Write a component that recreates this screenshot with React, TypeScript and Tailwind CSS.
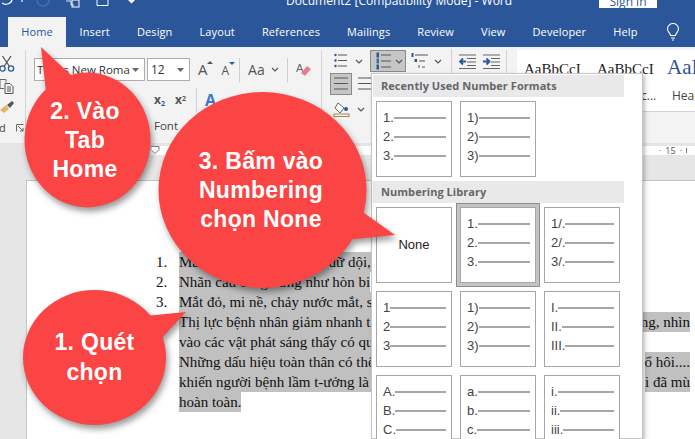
import React from "react";

const sans = "font-['Liberation_Sans',Arial,sans-serif]";
const ui = "font-['Open_Sans','Noto_Sans',sans-serif]";

function Chevron({ className = "" }: { className?: string }) {
  return (
    <svg width="8" height="5" viewBox="0 0 8 5" className={className}>
      <path d="M1 1l3 3 3-3" fill="none" stroke="#555" strokeWidth="1.2" />
    </svg>
  );
}

function Sep({ h = "h-[24px]" }: { h?: string }) {
  return <div className={`w-px bg-[#cfcfcf] ${h}`} />;
}

function Lines({ n = 3, w = 14, color = "#555", dots = false }: { n?: number; w?: number; color?: string; dots?: boolean }) {
  const ys = n === 3 ? [2, 7.5, 13] : [1.5, 5, 8.5, 12, 15];
  return (
    <svg width={w} height="16" viewBox={`0 0 ${w} 16`}>
      {ys.map((y) => (
        <line key={y} x1={dots ? 4 : 0} x2={w} y1={y} y2={y} stroke={color} strokeWidth="1" />
      ))}
      {dots &&
        ys.map((y) => <circle key={y} cx="1.5" cy={y} r="1.2" fill="#2b579a" />)}
    </svg>
  );
}

function NumIcon() {
  return (
    <svg width="15" height="18" viewBox="0 0 15 18">
      {[3, 9, 15].map((y, i) => (
        <g key={y}>
          <rect x="0.5" y={y - 2.5} width="2.5" height="5" fill="#2b579a" opacity={i === 1 ? 0.8 : 1} />
          <line x1="5" x2="15" y1={y} y2={y} stroke="#555" />
        </g>
      ))}
    </svg>
  );
}

function MultiIcon() {
  return (
    <svg width="18" height="18" viewBox="0 0 18 18">
      <rect x="0.5" y="1" width="2" height="4" fill="#2b579a" />
      <line x1="4" x2="17" y1="3" y2="3" stroke="#555" />
      <rect x="3.5" y="7" width="2.5" height="3" fill="#2b579a" />
      <line x1="8" x2="14" y1="9" y2="9" stroke="#555" />
      <line x1="8" x2="8" y1="13" y2="16" stroke="#555" />
      <line x1="11" x2="14" y1="15" y2="15" stroke="#555" />
    </svg>
  );
}

function Indent({ flip = false }: { flip?: boolean }) {
  return (
    <svg width="17" height="15" viewBox="0 0 17 15">
      {[1, 4.5, 8, 11.5, 14.5].map((y, i) => (
        <line key={y} x1={i === 0 || i === 4 ? 0 : 8} x2="17" y1={y} y2={y} stroke="#666" />
      ))}
      <path d={flip ? "M0 7.5h5M3.5 4.5l3 3-3 3" : "M7 7.5H1M4 4.5l-3 3 3 3"} fill="none" stroke="#2b579a" strokeWidth="1.8" />
    </svg>
  );
}

type CellProps = { items?: string[]; label?: string };

function Cell({ items, label }: CellProps) {
  return (
    <div className={`w-[76px] h-[76px] shrink-0 bg-white border border-[#a6a6a6] ${sans} text-[13px] text-[#444] ${label ? "flex items-center justify-center" : "pl-[6px] pr-[5px] pt-[6px]"}`}>
      {label ? <span className={`text-[13px] text-[#222] ${sans}`}>{label}</span> : null}
      {items?.map((t) => (
        <div key={t} className="flex items-center h-[19px]">
          <span className="leading-[19px]">{t}</span>
          <div className="flex-1 h-[2px] bg-[#a6a6a6]" />
        </div>
      ))}
    </div>
  );
}

function SelectedWrap({ children }: { children: React.ReactNode }) {
  return (
    <div className="w-[84px] h-[84px] -m-[4px] p-[3px] shrink-0 border border-[#8c8c8c] bg-[#c4c4c4] z-10">
      {children}
    </div>
  );
}

function MenuHeader({ children }: { children: React.ReactNode }) {
  return (
    <div className={`w-[251px] h-[22px] ml-px bg-[#e9e9e9] pl-[8px] text-[11px] leading-[22px] font-bold text-[#666] tracking-[0.05px] ${ui}`}>
      {children}
    </div>
  );
}

function Callout({
  className,
  width,
  height,
  cx,
  cy,
  rx,
  ry,
  points,
  lines,
  textClass,
}: {
  className: string;
  width: number;
  height: number;
  cx: number;
  cy: number;
  rx: number;
  ry: number;
  points: string;
  lines: string[];
  textClass: string;
}) {
  return (
    <div className={`absolute ${className}`}>
      <svg width={width} height={height} viewBox={`0 0 ${width} ${height}`} className="block overflow-visible drop-shadow-[2px_4px_3px_rgba(0,0,0,0.4)]">
        <ellipse cx={cx} cy={cy} rx={rx} ry={ry} fill="#fb4444" />
        <polygon points={points} fill="#fb4444" />
      </svg>
      <div className={`absolute text-center text-white font-bold ${sans} ${textClass}`}>
        {lines.map((l) => (
          <div key={l}>{l}</div>
        ))}
      </div>
    </div>
  );
}

const hl = "bg-[#c0c0c0]";

function DocLine({ num, left, right, hlRight = true, hlLeft = true }: { num?: string; left: string; right?: string; hlRight?: boolean; hlLeft?: boolean }) {
  return (
    <div className="flex h-[20px] leading-[20px]">
      <span className="w-[23px] shrink-0">{num}</span>
      <div className="flex justify-between w-[511px] shrink-0">
        <span className={`whitespace-nowrap ${hlLeft ? hl : ""}`}>{left}</span>
        {right ? <span className={`whitespace-nowrap ${hlRight ? hl : ""}`}>{right}</span> : null}
      </div>
    </div>
  );
}

export default function App() {
  const tabs = ["Insert", "Design", "Layout", "References", "Mailings", "Review", "View", "Developer", "Help"];
  return (
    <div className={`relative w-[695px] h-[439px] overflow-hidden bg-[#e6e6e6] flex flex-col ${ui}`}>
      {/* Title bar */}
      <div className="h-[17px] shrink-0 bg-[#2b579a] flex items-start text-white overflow-hidden relative">
        <svg width="150" height="8" viewBox="0 0 150 8" className="shrink-0">
          <path d="M2 3a7 7 0 0 0 9-1 5 5 0 0 0 1-3" fill="none" stroke="#fff" strokeWidth="1.4" />
          <circle cx="22" cy="1" r="1" fill="#cfd9ea" />
          <circle cx="43" cy="0" r="6" fill="none" stroke="#4d6fa8" strokeWidth="1.4" />
          <path d="M66 1h5v4h3" fill="none" stroke="#dfe6f2" />
          <rect x="72" y="0" width="7" height="7" fill="none" stroke="#fff" />
          <path d="M97 -1v6.500h11v-6.500" fill="none" stroke="#fff" />
          <path d="M128 0h7l-3.500 3.500z" fill="#fff" />
        </svg>
        <span className="ml-[136px] text-[12px] leading-[12px] -mt-[5px] whitespace-nowrap">Document2 [Compatibility Mode]  -  Word</span>
        <div className="ml-auto mr-[38px] w-[58px] h-[8px] bg-white text-[#2b579a] text-[12px] leading-[4px] text-center overflow-hidden">Sign in</div>
      </div>
      {/* Tabs */}
      <div className="h-[30px] shrink-0 bg-[#2b579a] flex items-stretch pl-[8px] text-[11px] tracking-[0.12px] text-white">
        <div className="w-[58px] shrink-0 bg-[#f3f3f3] text-[#2b579a] flex items-center justify-center">Home</div>
        {tabs.map((t) => (
          <div key={t} className="px-[13.5px] shrink-0 flex items-center">{t}</div>
        ))}
        <div className="ml-[15px] shrink-0 flex items-center">
          <svg width="14" height="18" viewBox="0 0 14 18">
            <path d="M4.500 12.500C4.500 10 1.500 9 1.500 6a5.500 5.500 0 0 1 11 0c0 3-3 4-3 6.500zM5 15h4M6 17h2" fill="none" stroke="#fff" strokeWidth="1.1" />
          </svg>
        </div>
      </div>
      {/* Ribbon */}
      <div className="h-[96px] shrink-0 bg-[#f3f3f3] flex items-stretch text-[#444]">
        {/* Clipboard */}
        <div className="w-[27px] shrink-0 relative border-r border-[#d4d4d4] my-[3px] flex flex-col items-start -ml-[1px]">
          <svg width="16" height="18" viewBox="0 0 16 18" className="mt-[5px] ml-0">
            <circle cx="3.500" cy="13.500" r="2.600" fill="none" stroke="#2b579a" strokeWidth="1.300" />
            <circle cx="12" cy="13.500" r="2.600" fill="none" stroke="#2b579a" strokeWidth="1.300" />
            <path d="M5 11.500L12 1M10.500 11.500L3.500 1" stroke="#555" strokeWidth="1.300" />
          </svg>
          <svg width="16" height="15" viewBox="0 0 16 15" className="mt-[6px]">
            <path d="M1 0.500h6v3M1 0.500v9h4" fill="none" stroke="#666" />
            <path d="M6 4.500h5l3 3v7H6zM8 8h4M8 10h4M8 12h4" fill="none" stroke="#555" />
          </svg>
          <svg width="17" height="14" viewBox="0 0 17 14" className="mt-[6px]">
            <path d="M1 10l6-5 3 4-5 4z" fill="#e2b968" />
            <path d="M8 5l5-4 2 2-4 5z" fill="#555" />
          </svg>
          <div className="mt-[8px] flex items-center text-[11px] leading-[12px] h-[12px]">
            <span className="w-[17px]">d</span>
            <svg width="8" height="8" viewBox="0 0 8 8">
              <path d="M0.500 7.500v-7h7M2 2l5 5M7 4v3H4" fill="none" stroke="#666" />
            </svg>
          </div>
        </div>
        {/* Font */}
        <div className="w-[296px] shrink-0 border-r border-[#d4d4d4] my-[3px] pl-[8px] flex flex-col">
          <div className="flex items-center h-[23px] mt-[8px] text-[11.5px]">
            <div className="w-[111px] h-[23px] bg-white border border-[#ababab] flex items-center pl-[2px] pr-[5px] text-[#333] whitespace-nowrap overflow-hidden">
              <span className="flex-1 overflow-hidden">Times New Roma</span>
              <svg width="7" height="4" viewBox="0 0 7 4" className="shrink-0"><path d="M0 0h7l-3.500 4z" fill="#666" /></svg>
            </div>
            <div className="ml-[2px] w-[43px] h-[23px] bg-white border border-[#ababab] flex items-center justify-between pl-[3px] pr-[5px] text-[12px] text-[#333]">
              <span>12</span>
              <svg width="7" height="4" viewBox="0 0 7 4"><path d="M0 0h7l-3.500 4z" fill="#666" /></svg>
            </div>
            <span className="ml-[8px] text-[15px] text-[#555] relative">A<i className="absolute -right-[5px] top-[3px] w-0 h-0 border-x-[3px] border-x-transparent border-b-[3px] border-b-[#555]" /></span>
            <span className="ml-[14px] text-[12px] text-[#555] mt-[3px] relative">A<i className="absolute -right-[6px] top-[0px] w-0 h-0 border-x-[3px] border-x-transparent border-t-[3px] border-t-[#2b579a]" /></span>
            <div className="ml-[10px]"><Sep /></div>
            <span className="ml-[8px] text-[14px] text-[#555]">Aa</span>
            <Chevron className="ml-[6px]" />
            <div className="ml-[8px]"><Sep /></div>
            <svg width="16" height="16" viewBox="0 0 16 16" className="ml-[8px]">
              <text x="0" y="10" fontSize="11" fill="#666" fontFamily="Liberation Sans">A</text>
              <path d="M5 11l6-7 4 3-6 7z" fill="#e87d92" />
            </svg>
          </div>
          <div className="flex items-center h-[24px] mt-[7px] text-[12px] font-bold text-[#555]">
            <span className="ml-[120px]">x<sub className="text-[7px] text-[#2b579a]">2</sub></span>
            <span className="ml-[10px]">x<sup className="text-[7px]">2</sup></span>
            <div className="ml-[10px]"><Sep /></div>
            <span className="ml-[8px] text-[16px] text-[#3c78c8]">A</span>
          </div>
          <div className="mt-[7px] pl-[120px] text-[11.5px] leading-[14px] text-[#444]">Font</div>
        </div>
        {/* Paragraph */}
        <div className="w-[185px] shrink-0 border-r border-[#d4d4d4] my-[3px] flex flex-col">
          <div className="flex items-center h-[22px]">
            <div className="ml-[12px]"><Lines w={13} dots /></div>
            <Chevron className="ml-[8px]" />
            <div className="ml-[7px] w-[36px] h-[22px] bg-[#c6c6c6] border border-[#8a8a8a]" />
            <div className="ml-[5px]"><MultiIcon /></div>
            <Chevron className="ml-[5px]" />
            <div className="ml-[9px]"><Sep /></div>
            <div className="ml-[7px]"><Indent /></div>
            <div className="ml-[7px]"><Indent flip /></div>
          </div>
          <div className="flex items-center h-[22px] mt-px">
            <div className="ml-[8px] w-[22px] h-[22px] bg-[#c6c6c6] border border-[#8a8a8a] flex items-center justify-center"><Lines w={14} /></div>
            <div className="ml-[6px]"><Lines w={13} /></div>
          </div>
          <div className="flex items-center h-[20px] mt-[4px]">
            <svg width="17" height="16" viewBox="0 0 17 16" className="ml-[11px]">
              <path d="M5 2l6 5-4 5-5-5z" fill="#fff" stroke="#666" />
              <circle cx="13" cy="8" r="2" fill="#2b579a" />
              <rect x="1" y="13" width="15" height="2.500" fill="none" stroke="#a08a50" />
            </svg>
            <Chevron className="ml-[7px]" />
          </div>
        </div>
        {/* Styles */}
        <div className="flex-1 pl-[10px] pt-[3px]">
          <div className="bg-white border-b border-[#d4d4d4] h-[62px] pl-[7px] overflow-hidden">
            <div className="flex font-['Liberation_Serif',serif] text-[15px] text-[#222] leading-[18px] pt-[10px] whitespace-nowrap h-[34px]">
              <span className="w-[73px]">AaBbCcI</span>
              <span className="w-[70px]">AaBbCcI</span>
              <span className="text-[21px] text-[#2f5496] -mt-[5px] leading-[24px]">AaBl</span>
            </div>
            <div className="flex text-[12px] text-[#444] pt-[3px] whitespace-nowrap">
              <span className="w-[73px]" />
              <span className="w-[75px] pl-[44px]">c...</span>
              <span>Heading</span>
            </div>
          </div>
        </div>
      </div>
      {/* Ruler */}
      <div className="h-[12px] shrink-0 mt-[3px] flex items-start bg-[#e6e6e6]">
        <div className="w-[150px] shrink-0 flex justify-end">
          <svg width="10" height="10" viewBox="0 0 10 10" className="-mr-[10px] relative z-[1]">
            <path d="M1 0.500h8v3l-4 4-4-4z" fill="#fff" stroke="#777" />
          </svg>
        </div>
        <div className="flex-1 h-[9px] bg-white flex items-center justify-end pr-[8px] text-[9px] leading-[9px] text-[#555] gap-[4px] whitespace-nowrap">
          <span>·</span><span>15</span><span>·</span><span className="w-px h-[5px] bg-[#777]" />
        </div>
      </div>
      {/* Document */}
      <div className="flex-1 flex pl-[26px] pt-[22px] min-h-0">
        <div className="flex-1 bg-white border-l border-t border-[#c4c4c4] pl-[129px] pt-[71px] font-['Liberation_Serif',serif] text-[15px] text-[#111] overflow-hidden">
          <DocLine num="1." left="Mắt đau nhức, nhức đầu dữ dội," />
          <DocLine num="2." left="Nhãn cầu căng cứng như hòn bi" />
          <DocLine num="3." left="Mắt đỏ, mi nề, chảy nước mắt, sợ ánh sáng" />
          <DocLine left="Thị lực bệnh nhân giảm nhanh thị trường" right="ng, nhìn" />
          <DocLine left="vào các vật phát sáng thấy có quầng xanh đỏ" />
          <DocLine left="Những dấu hiệu toàn thân có thể gặp như buồn nôn" right="ổ hôi...." />
          <DocLine left="khiến người bệnh lầm t-ưởng là ngộ độc" right="i đã mù" />
          <DocLine left="hoàn toàn." />
        </div>
      </div>

      {/* Numbering icon on top of highlighted button */}
      <div className="absolute left-[376px] top-[52px] flex items-center">
        <NumIcon />
        <Chevron className="ml-[4px]" />
      </div>

      {/* Numbering menu */}
      <div className="absolute left-[371px] top-[73px] w-[272px] h-[366px] bg-white border border-[#c6c6c6] shadow-[2px_2px_4px_rgba(0,0,0,0.25)] pt-px">
        <MenuHeader>Recently Used Number Formats</MenuHeader>
        <div className="flex gap-[8px] pl-[4px] pt-[4px]">
          <Cell items={["1.", "2.", "3."]} />
          <Cell items={["1)", "2)", "3)"]} />
        </div>
        <div className="mt-[4px]">
          <MenuHeader>Numbering Library</MenuHeader>
        </div>
        <div className="grid grid-cols-[76px_76px_76px] gap-[8px] pl-[4px] pt-[4px]">
          <Cell label="None" />
          <SelectedWrap><Cell items={["1.", "2.", "3."]} /></SelectedWrap>
          <Cell items={["1/.", "2/.", "3/."]} />
          <Cell items={["1", "2", "3"]} />
          <Cell items={["1)", "2)", "3)"]} />
          <Cell items={["I.", "II.", "III."]} />
          <Cell items={["A.", "B.", "C."]} />
          <Cell items={["a.", "b.", "c."]} />
          <Cell items={["i.", "ii.", "iii."]} />
        </div>
      </div>

      {/* Callouts */}
      <Callout
        className="left-[0px] top-[40px]"
        width={170}
        height={170}
        cx={87.5}
        cy={100}
        rx={63}
        ry={67.500}
        points="41,7 46,52 72,36"
        lines={["2. Vào", "Tab", "Home"]}
        textClass="left-[25px] w-[120px] top-[57px] text-[23px] leading-[29px] tracking-[0.3px]"
      />
      <Callout
        className="left-[150px] top-[85px]"
        width={250}
        height={210}
        cx={112.500}
        cy={105}
        rx={104}
        ry={98}
        points="200,118 245,150 195,155"
        lines={["3. Bấm vào", "Numbering", "chọn None"]}
        textClass="left-[11px] w-[200px] top-[62px] text-[23px] leading-[29px] tracking-[0.3px]"
      />
      <Callout
        className="left-[15px] top-[285px]"
        width={180}
        height={145}
        cx={79.500}
        cy={72.500}
        rx={71.500}
        ry={67.500}
        points="171,27 130,31 145,55"
        lines={["1. Quét", "chọn"]}
        textClass="left-[8px] w-[143px] top-[42px] text-[23px] leading-[30px] tracking-[0.3px]"
      />
    </div>
  );
}
